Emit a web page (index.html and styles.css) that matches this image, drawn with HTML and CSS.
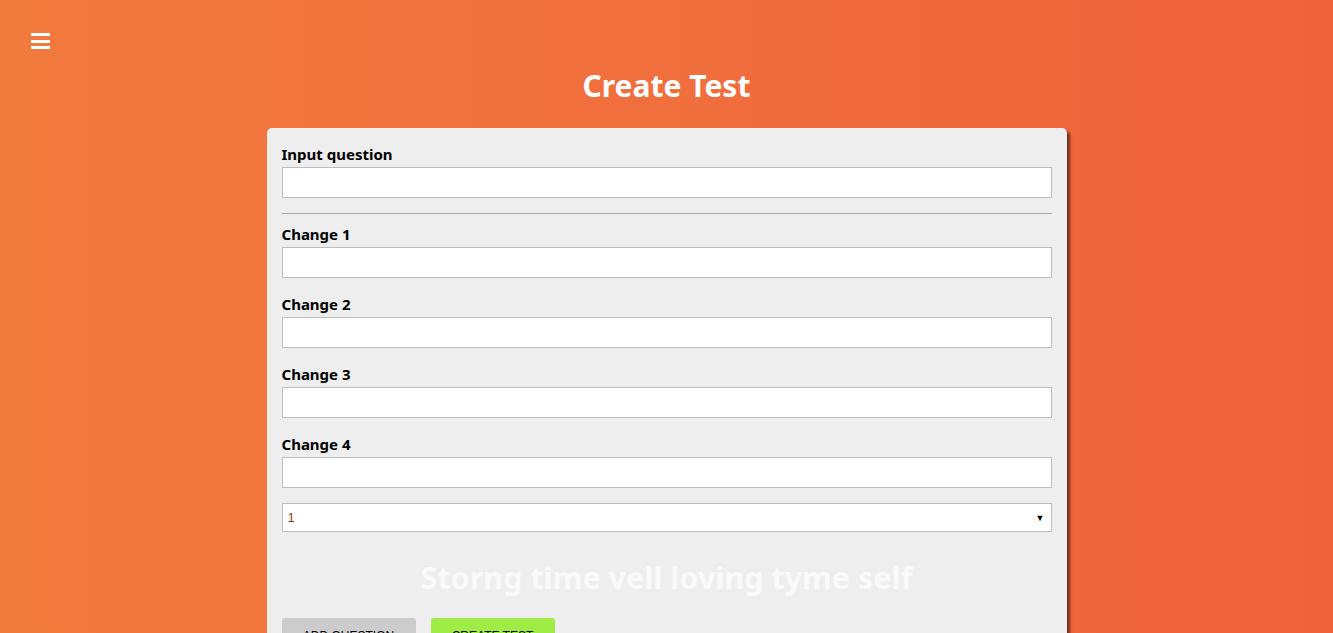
FILE: index.html
```html
<!DOCTYPE html>
<html lang="en">
<head>
<meta charset="utf-8">
<title>Create Test</title>
<link rel="stylesheet" href="styles.css">
</head>
<body>
<header class="topbar">
  <button class="menu-btn" aria-label="Menu">
    <span class="bar"></span><span class="bar"></span><span class="bar"></span>
  </button>
</header>
<h1 class="page-title">Create Test</h1>
<main class="card">
  <div class="field first">
    <label class="label">Input question</label>
    <input class="text-input" type="text">
  </div>
  <hr class="divider">
  <div class="field">
    <label class="label">Change 1</label>
    <input class="text-input" type="text">
  </div>
  <div class="field">
    <label class="label">Change 2</label>
    <input class="text-input" type="text">
  </div>
  <div class="field">
    <label class="label">Change 3</label>
    <input class="text-input" type="text">
  </div>
  <div class="field last">
    <label class="label">Change 4</label>
    <input class="text-input" type="text">
  </div>
  <div class="select-box">
    <span class="select-value">1</span>
    <span class="select-arrow">&#9660;</span>
  </div>
  <h2 class="motto">Storng time vell loving tyme self</h2>
  <div class="actions">
    <button class="btn btn-grey">Add question</button>
    <button class="btn btn-green">Create test</button>
  </div>
</main>
</body>
</html>
```
FILE: styles.css
```css
html, body {
  margin: 0;
  padding: 0;
}
body {
  min-height: 633px;
  background: linear-gradient(to right, #f17a3d 0%, #f0623c 100%);
  font-family: "Noto Sans", "Open Sans", sans-serif;
  overflow: hidden;
}
.topbar {
  padding: 33px 0 0 31px;
  height: 17px;
}
.menu-btn {
  display: flex;
  flex-direction: column;
  gap: 3.5px;
  width: 19px;
  padding: 0;
  border: 0;
  background: none;
  cursor: pointer;
}
.bar {
  display: block;
  width: 19px;
  height: 3px;
  background: #fff;
}
.page-title {
  margin: 16px 0 0;
  text-align: center;
  color: #fff;
  font-size: 30px;
  line-height: 40px;
  font-weight: 700;
  height: 62px;
}
.card {
  width: 770px;
  margin: 0 auto;
  padding: 16px 15px 20px;
  background: #eeeeee;
  border-radius: 5px;
  box-shadow: 3px 3px 3px rgba(0, 0, 0, 0.55);
}
.field {
  margin-bottom: 16px;
}
.field.first {
  margin-bottom: 0;
}
.field.last {
  margin-bottom: 15px;
}
.label {
  display: block;
  font-size: 15px;
  line-height: 20px;
  font-weight: 700;
  color: #000;
  margin-bottom: 3px;
}
.text-input {
  display: block;
  box-sizing: border-box;
  width: 100%;
  height: 31px;
  margin: 0;
  border: 1px solid #bdbdbd;
  background: #fff;
  outline: none;
}
.divider {
  margin: 15px 0 10px;
  border: 0;
  border-top: 1px solid #a9a9a9;
  height: 0;
}
.select-box {
  box-sizing: border-box;
  height: 29px;
  border: 1px solid #bdbdbd;
  background: #fff;
  display: flex;
  align-items: center;
  justify-content: space-between;
  padding: 0 6px 0 5px;
  font-family: "Liberation Sans", Arial, sans-serif;
  font-size: 13px;
}
.select-value {
  color: #8a3c10;
}
.select-arrow {
  font-size: 9px;
  color: #000;
}
.motto {
  margin: 25px 0 21px;
  text-align: center;
  color: #fafafa;
  font-size: 30.5px;
  line-height: 40px;
  font-weight: 700;
}
.actions {
  display: flex;
  gap: 15px;
}
.btn {
  height: 36px;
  border: 0;
  border-radius: 3px;
  font-family: "Liberation Sans", Arial, sans-serif;
  font-size: 12px;
  text-transform: uppercase;
  color: #000;
  padding: 0 21px;
  cursor: pointer;
}
.btn-grey {
  width: 134px;
  background: #cccccc;
}
.btn-green {
  width: 124px;
  background: #9eec45;
}
```
